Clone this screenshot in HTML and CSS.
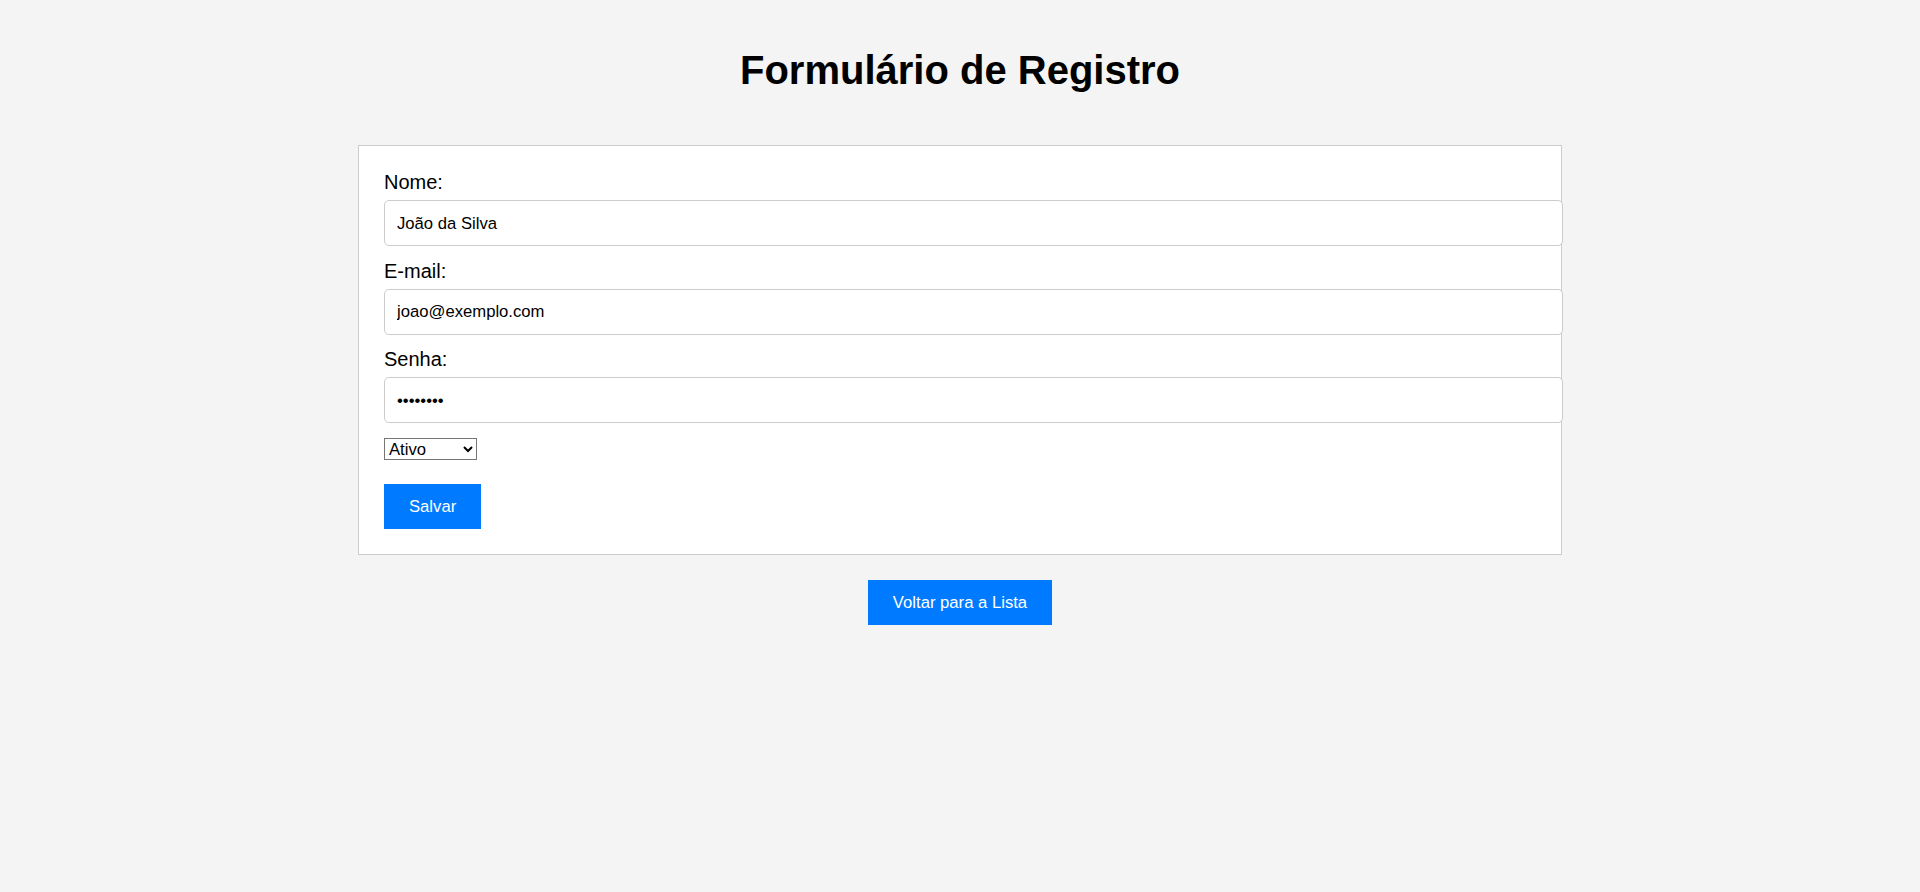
FILE: index.html
```html
<!DOCTYPE html>
<html lang="pt-BR">
<head>
<meta charset="utf-8">
<title>Formulário de Registro</title>
<link rel="stylesheet" href="styles.css">
</head>
<body>
<main class="page">
  <h1 class="title">Formulário de Registro</h1>
  <form class="form-card">
    <label class="field-label" for="nome">Nome:</label>
    <input class="field-input" id="nome" type="text" value="João da Silva">
    <label class="field-label" for="email">E-mail:</label>
    <input class="field-input" id="email" type="email" value="joao@exemplo.com">
    <label class="field-label" for="senha">Senha:</label>
    <input class="field-input" id="senha" type="password" value="12345678">
    <select class="status-select">
      <option>Ativo</option>
      <option>Inativo</option>
    </select>
    <div class="actions">
      <button type="button" class="btn">Salvar</button>
    </div>
  </form>
  <div class="back-row">
    <button type="button" class="btn">Voltar para a Lista</button>
  </div>
</main>
</body>
</html>
```

FILE: styles.css
```css
html, body {
  margin: 0;
  padding: 0;
  background: #f4f4f4;
  font-family: "Liberation Sans", Arial, sans-serif;
  color: #000;
}

.page {
  display: flex;
  flex-direction: column;
  align-items: center;
  padding-top: 47px;
}

.title {
  margin: 0 0 52px 0;
  font-size: 40px;
  line-height: 46px;
  font-weight: bold;
  text-align: center;
}

.form-card {
  box-sizing: border-box;
  width: 1204px;
  background: #fff;
  border: 1px solid #ccc;
  padding: 25px;
  display: flex;
  flex-direction: column;
  align-items: flex-start;
}

.field-label {
  display: block;
  font-size: 20px;
  line-height: 23px;
  margin-bottom: 6px;
}

.field-input {
  box-sizing: content-box;
  width: 100%;
  height: 19px;
  padding: 12.5px 12.5px 12.5px 12px;
  margin: 0 0 13.5px 0;
  border: 1px solid #ccc;
  border-radius: 5px;
  font-family: "Liberation Sans", Arial, sans-serif;
  font-size: 16.67px;
  line-height: 19px;
  color: #000;
  background: #fff;
  outline: none;
}

.status-select {
  box-sizing: border-box;
  width: 93px;
  height: 22px;
  margin: 1px 0 0 0;
  font-family: "Liberation Sans", Arial, sans-serif;
  font-size: 16.67px;
  color: #000;
  background: #fff;
  border: 1px solid #767676;
  border-radius: 0;
}

.actions {
  margin-top: 24px;
}

.btn {
  display: block;
  box-sizing: border-box;
  height: 45px;
  padding: 0 25px;
  border: none;
  border-radius: 0;
  background: #007bff;
  color: #fff;
  font-family: "Liberation Sans", Arial, sans-serif;
  font-size: 16.67px;
  line-height: 45px;
  cursor: pointer;
}

.back-row {
  margin-top: 25px;
  display: flex;
  justify-content: center;
}
```
